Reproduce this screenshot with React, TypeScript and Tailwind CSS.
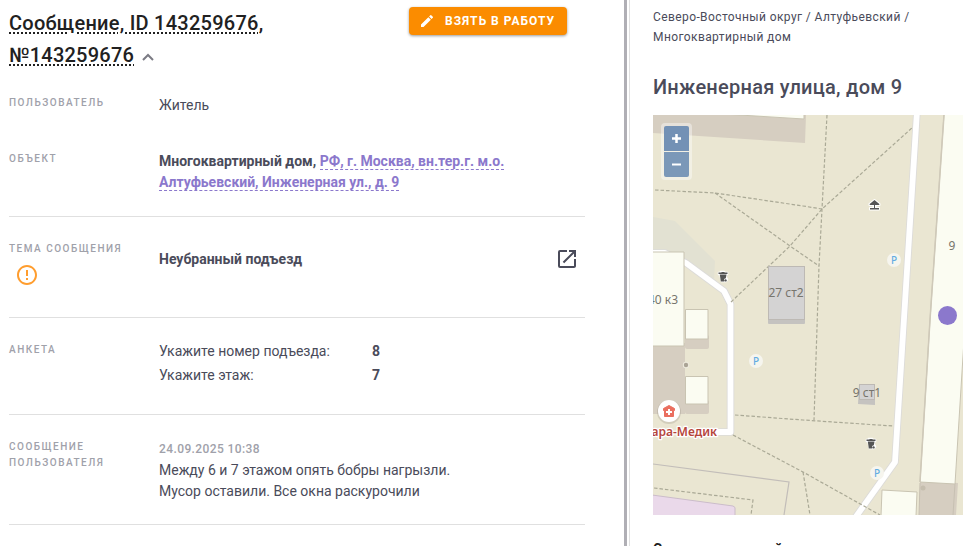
import { ReactNode } from "react"
import { MdErrorOutline, MdModeEdit, MdOpenInNew } from "react-icons/md"
import clsx from "clsx"

const answers = [
  { question: "Укажите номер подъезда:", value: "8" },
  { question: "Укажите этаж:", value: "7" },
]

const footpaths = [
  "174,0 169,94 166,151 161,305",
  "2,75 62,78 150,91 169,94",
  "62,78 137,131 166,151",
  "78,187 137,131 169,94 260,12",
  "82,300 150,305 240,311",
  "80,320 150,357 227,400",
  "150,357 157,400",
  "1,373 100,385 98,400",
]

const parkings = [
  { x: 241, y: 145 },
  { x: 103, y: 246 },
  { x: 224, y: 358 },
]

const bins = [
  { x: 70, y: 162 },
  { x: 218, y: 329 },
]

type RowProps = {
  label: string
  icon?: ReactNode
  divided?: boolean
  children: ReactNode
}

const Row = ({ label, icon, divided = true, children }: RowProps) => (
  <div
    className={clsx(
      "flex",
      divided && "border-b border-[#e0e0e0] pt-6 pb-[22px]",
      !divided && "pb-[11px]",
    )}
  >
    <dt className="w-[150px] shrink-0 pr-4 text-[10px] leading-4 font-medium tracking-[1.5px] text-[#a0a1aa] uppercase">
      <span className="whitespace-pre-line">{label}</span>
      {icon}
    </dt>
    <dd className="min-w-0 flex-1 text-sm leading-[21px]">{children}</dd>
  </div>
)

const Building = ({ points }: { points: string }) => (
  <polygon
    points={points}
    fill="#fbfcf2"
    stroke="#c9c4b2"
    strokeWidth="1"
    strokeLinejoin="round"
  />
)

const Bin = ({ x, y }: { x: number; y: number }) => (
  <g transform={`translate(${x} ${y})`}>
    <path
      d="M-4.5-4.5h2v-1h4v1h3v2h-1l-.5 2.5 1.5 2.5-1.5 2h-4.500l-1.500-7h-1.500z"
      fill="#fff"
      stroke="#fff"
      strokeWidth="1.500"
      strokeLinejoin="round"
    />
    <path
      d="M-4.500-4.500H-1.500V-5H1.500V-4.500H4.500V-3H-4.500ZM-3.200-2.500H3.500L2.800 1.200 1 2V4.500H-2.200Z"
      fill="#555"
    />
    <circle cx="2.500" cy="3.400" r="1.200" fill="#555" />
  </g>
)

const CityMap = () => (
  <svg
    className="h-full w-full"
    viewBox="0 0 310 400"
    preserveAspectRatio="xMinYMin slice"
    fontFamily="'Noto Sans', sans-serif"
    fontSize="12"
    role="img"
    aria-label="Карта"
  >
    <rect width="310" height="400" fill="#eae6d2" />

    {/* shadows and greenery */}
    <polygon points="0,0 153,0 152,28 0,18" fill="#d6cec1" />
    <polygon points="0,102 22,106 62,146 61,166 33,144 0,136" fill="#e2e1d2" />
    <rect y="228" width="32" height="71" fill="#d6cec1" />
    <rect x="32" y="220" width="24" height="14" rx="2" fill="#d6cec1" />
    <rect x="32" y="285" width="24" height="14" rx="2" fill="#d6cec1" />
    <polygon points="267,366 305,368 303,400 266,400" fill="#d6cec1" />
    <path d="M267 368 266 400M302 368 300 400" stroke="#c7c0b2" />
    <circle cx="270" cy="373" r="2.500" fill="#c5beae" />

    {/* roads */}
    <g fill="none" strokeLinejoin="round">
      <g stroke="#dcdbd9" strokeWidth="7.500">
        <polyline points="0,138 12,138 33,148 71,176 77.500,189 77.500,317 50,317" />
        <polyline points="264,-4 242,347 202,403" />
      </g>
      <g stroke="#fff" strokeWidth="5.800">
        <polyline points="0,138 12,138 33,148 71,176 77.500,189 77.500,317 50,317" />
        <polyline points="264,-4 242,347 202,403" />
      </g>
    </g>

    <g fill="none" stroke="#aaa996" strokeWidth="1.200" strokeDasharray="3.500 2">
      {footpaths.map((points) => (
        <polyline key={points} points={points} />
      ))}
    </g>
    <polyline points="0,349 136,367 131,400" fill="none" stroke="#c2bdb9" strokeWidth="1.200" />
    <path d="M-1 380 80 391Q83 392 82 395V401H-1Z" fill="#ead9ea" stroke="#cbbcca" />

    {/* houses */}
    <Building points="70,-1 151,-1 151,4" />
    <Building points="-1,137 31,137 31,231 -1,231" />
    <Building points="32.500,194.500 55,194.500 55,224 32.500,224" />
    <Building points="32.500,261.500 55,261.500 55,289 32.500,289" />
    <Building points="291,-1 277,205 267,367 302,369 311,225 311,-1" />
    <Building points="229,375 264,377 263,401 228,401" />
    <path d="M291 0 277 205 267 367" fill="none" stroke="#cfc9b9" strokeWidth="1.500" />
    <circle cx="33" cy="250" r="3.200" fill="#eeeade" />
    <circle cx="33" cy="250" r="2.200" fill="#aaa395" />

    <rect x="115" y="151" width="37" height="58" rx="1" fill="#c5c3c0" />
    <rect x="115.500" y="151.500" width="36" height="53" fill="#d4d3d3" stroke="#bdb9b4" />
    <path d="M206 269h16v21l-17-1z" fill="#c5c3c0" />
    <rect x="206.500" y="269.500" width="15" height="15" fill="#d4d3d3" stroke="#bdb9b4" />

    <g fill="#77756d">
      <text x="25" y="189" textAnchor="end">
        40 к3
      </text>
      <text x="133" y="182" textAnchor="middle">
        27 ст2
      </text>
      <text x="214" y="282" textAnchor="middle">
        9 ст1
      </text>
      <text x="299" y="135" textAnchor="middle">
        9
      </text>
    </g>

    {parkings.map(({ x, y }) => (
      <g key={x}>
        <circle cx={x} cy={y} r="7" fill="#f6f5ee" />
        <text
          x={x}
          y={y + 4}
          textAnchor="middle"
          fontSize="10"
          fontWeight="500"
          fill="#62ace2"
        >
          P
        </text>
      </g>
    ))}
    {bins.map((bin) => (
      <Bin key={bin.x} {...bin} />
    ))}

    {/* gazebo */}
    <g transform="translate(221.500 90)" strokeLinejoin="round">
      <path d="M0-5 5-1V0H1V3H4.500V4.500H-4.500V3H-1V0H-5V-1Z" fill="#fff" stroke="#fff" strokeWidth="2" />
      <path d="M0-5 4.800-1V0H.5V3H4.500V4.500H-4.500V3H-.5V0H-4.800V-1Z" fill="#555" />
    </g>

    {/* pharmacy */}
    <circle cx="16" cy="297" r="12" fill="#8a8378" opacity="0.25" />
    <circle cx="16" cy="296" r="11" fill="#fff" />
    <path
      d="M16 290.500 21.500 293.500V295.500H20.500V301.500H11.500V295.500H10.500V293.500Z"
      fill="#ea6f60"
      stroke="#ea6f60"
      strokeLinejoin="round"
    />
    <path d="M16 294V300M13 297H19" stroke="#fff" strokeWidth="2" />
    <text
      x="64"
      y="321"
      textAnchor="end"
      fontWeight="600"
      fill="#b5453c"
      stroke="#fff"
      strokeWidth="2.500"
      strokeLinejoin="round"
      paintOrder="stroke"
    >
      ара-Медик
    </text>

    <circle cx="294.500" cy="200.500" r="9.500" fill="#8b78cc" />
  </svg>
)

const MessagePanel = () => (
  <main className="min-w-0 flex-1 overflow-hidden border-r-[3px] border-[#b0afb5] pt-[7px] pr-[39px] pl-[9px]">
    <header className="mb-6 flex items-start justify-between gap-4 pr-[18px]">
      <h1 className="max-w-[270px] text-xl leading-8 font-medium tracking-[0.25px] text-[#212121]">
        <span className="underline decoration-dotted decoration-2 underline-offset-2">
          Сообщение, ID 143259676
        </span>
        ,{" "}
        <span className="underline decoration-dotted decoration-2 underline-offset-2">
          №143259676
        </span>
        <button type="button" aria-label="Свернуть" className="ml-2 cursor-pointer">
          <svg width="12" height="9" viewBox="0 0 12 9" fill="none">
            <path d="M1 7 6 2 11 7" stroke="#7b7b84" strokeWidth="2" />
          </svg>
        </button>
      </h1>
      <button
        type="button"
        className="flex h-7 shrink-0 cursor-pointer items-center gap-2.5 rounded bg-[#fb8c00] pr-3 pl-2.5 text-xs font-bold tracking-[1px] text-white uppercase shadow-[0_1px_3px_rgba(0,0,0,0.4)]"
      >
        <MdModeEdit className="size-4" />
        Взять в работу
      </button>
    </header>

    <dl>
      <Row label="Пользователь" divided={false}>
        Житель
      </Row>
      <Row label="Объект">
        <div className="mb-px max-w-[350px] font-bold">
          Многоквартирный дом,{" "}
          <a href="#" className="border-b border-dashed border-[#8b78cc] text-[#8b78cc]">
            РФ, г. Москва, вн.тер.г. м.о. Алтуфьевский, Инженерная ул., д. 9
          </a>
        </div>
      </Row>
      <Row
        label="Тема сообщения"
        icon={<MdErrorOutline className="mt-1.5 ml-1.5 size-6 text-[#ff9d2e]" />}
      >
        <div className="mb-[18px] flex items-center justify-between">
          <span className="font-bold">Неубранный подъезд</span>
          <button type="button" aria-label="Открыть" className="cursor-pointer p-1.5">
            <MdOpenInNew className="size-6" />
          </button>
        </div>
      </Row>
      <Row label="Анкета">
        <div className="mb-2 flex flex-col gap-1.5 leading-[18px]">
          {answers.map(({ question, value }) => (
            <div key={question} className="flex">
              <span className="w-[213px]">{question}</span>
              <span className="font-bold">{value}</span>
            </div>
          ))}
        </div>
      </Row>
      <Row label={"Сообщение\nпользователя"}>
        <time className="block text-xs leading-[21px] font-medium tracking-[0.4px] text-[#a0a1aa]">
          24.09.2025 10:38
        </time>
        <p>Между 6 и 7 этажом опять бобры нагрызли.</p>
        <p>Мусор оставили. Все окна раскурочили</p>
      </Row>
    </dl>
  </main>
)

const ObjectPanel = () => (
  <aside className="ml-0.5 w-[334px] shrink-0 overflow-hidden border-l border-[#e0e0e0] pl-[23px]">
    <nav className="pt-[7px] text-xs leading-5 tracking-[0.4px]">
      <a href="#">Северо-Восточный округ</a> / <a href="#">Алтуфьевский</a> /
      <br />
      <a href="#">Многоквартирный дом</a>
    </nav>
    <h2 className="mt-6 text-xl leading-8 font-medium tracking-[0.25px]">
      Инженерная улица, дом 9
    </h2>
    <div className="relative mt-3 h-[400px]">
      <CityMap />
      <div className="absolute top-2 left-2 flex flex-col gap-px rounded bg-white/40 p-[3px]">
        <button
          type="button"
          aria-label="Приблизить"
          className="flex size-[25px] cursor-pointer items-center justify-center rounded-t-xs bg-[#7391b5]"
        >
          <svg width="9" height="9" viewBox="0 0 9 9">
            <path d="M4.500 0V9M0 4.500H9" stroke="#fff" strokeWidth="2.500" />
          </svg>
        </button>
        <button
          type="button"
          aria-label="Отдалить"
          className="flex size-[25px] cursor-pointer items-center justify-center rounded-b-xs bg-[#7b98b8]"
        >
          <svg width="9" height="3" viewBox="0 0 9 3">
            <path d="M0 1.500H9" stroke="#fff" strokeWidth="2" />
          </svg>
        </button>
      </div>
    </div>
    <h3 className="mt-6 text-sm leading-[21px] font-bold text-[#212121]">
      Список помещений
    </h3>
  </aside>
)

const App = () => (
  <div className="flex h-screen overflow-hidden bg-white font-[Roboto,sans-serif] text-[#4a4b5a]">
    <MessagePanel />
    <ObjectPanel />
  </div>
)

export default App
